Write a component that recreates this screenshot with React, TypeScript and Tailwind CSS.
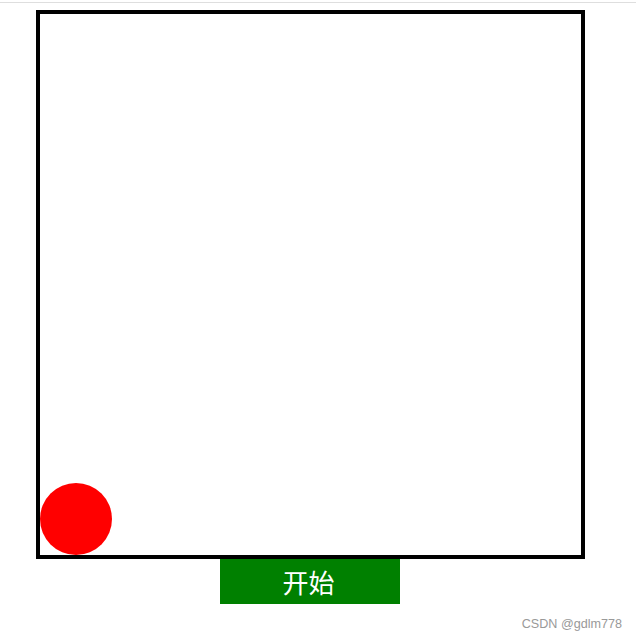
export default function App() {
  return (
    <div className="w-[637px] h-[640px] bg-white relative font-['Liberation_Sans','Noto_Sans_CJK_SC',sans-serif]">
      <div className="pt-[2px]">
        <div className="h-px bg-[#dedede] mr-px" />
      </div>

      <div className="ml-[36px] mt-[7px] w-[549px]">
        {/* play field */}
        <div className="relative h-[549px] border-4 border-black">
          <div className="absolute left-0 bottom-0 w-[72px] h-[72px] rounded-full bg-[#ff0000]" />
        </div>

        <div className="flex justify-center pr-px">
          <button className="w-[180px] h-[45px] bg-[#008000] text-white text-[26px] leading-none flex items-center justify-center pr-[3px] font-['Noto_Sans_CJK_SC',sans-serif]">
            开始
          </button>
        </div>
      </div>

      <div className="absolute right-[15px] bottom-[9px] text-[12.6px] leading-none text-[#999999]">
        CSDN @gdlm778
      </div>
    </div>
  )
}
